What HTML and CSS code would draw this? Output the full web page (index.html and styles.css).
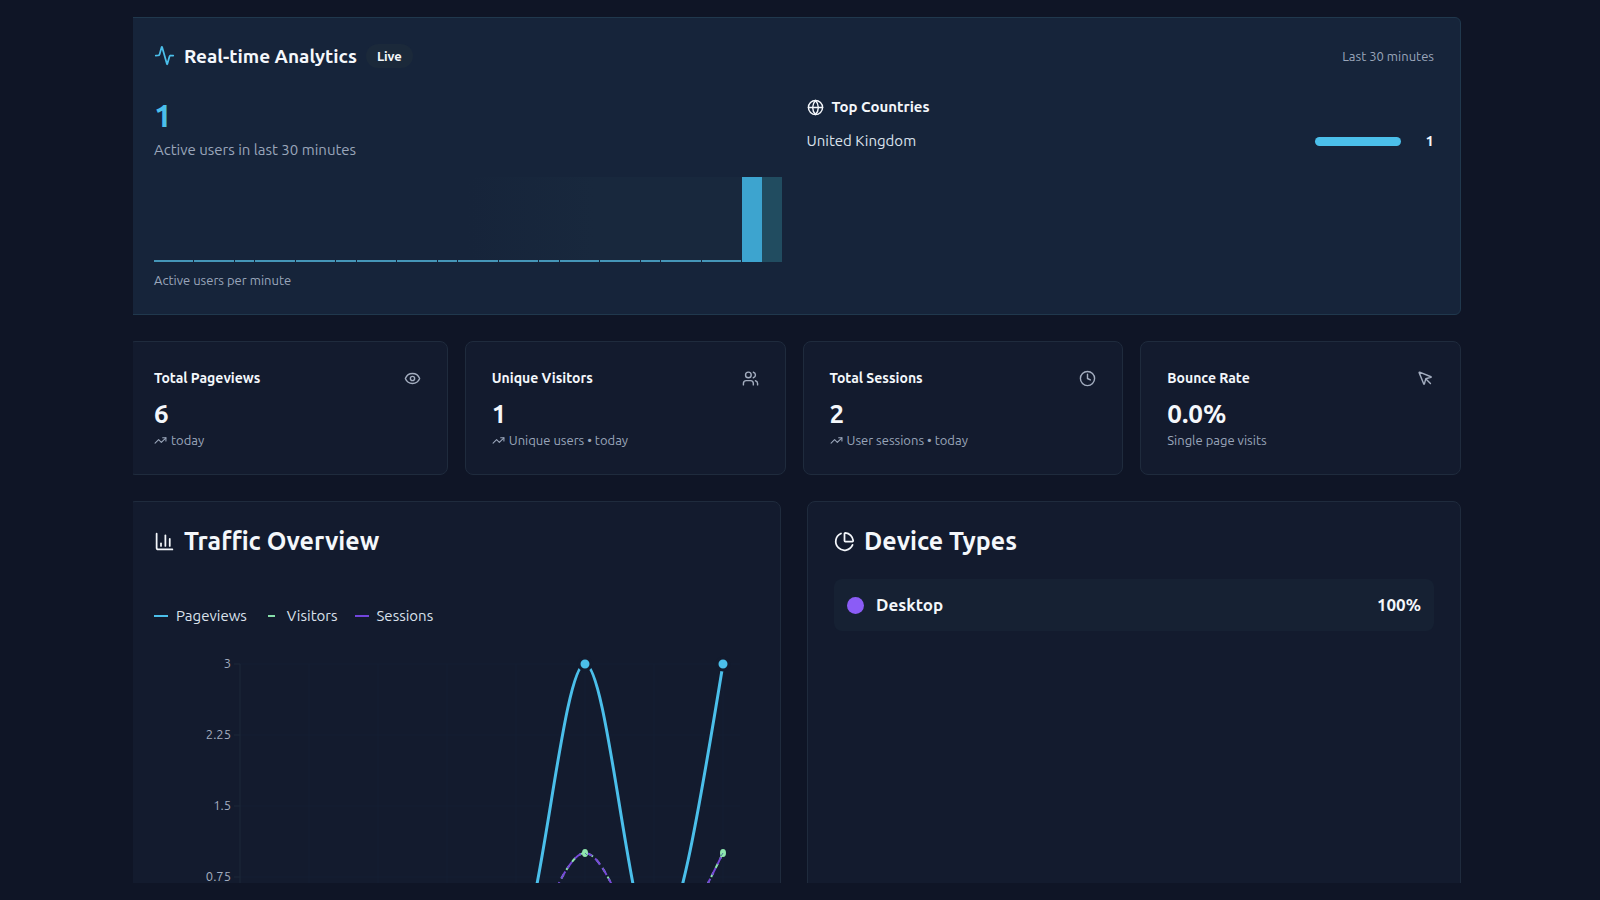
FILE: index.html
```
<!DOCTYPE html>
<html lang="en">
  <head>
    <meta charset="UTF-8" />
    <meta name="viewport" content="width=device-width, initial-scale=1.0" />
    <title>Analytics</title>
    <link rel="stylesheet" href="styles.css">
  </head>
  <body>
    <main class="viewport">
      <div class="dashboard">
        <!-- Real-time -->
        <section class="card realtime">
          <header class="realtime-header">
            <svg class="icon icon-lg accent" viewBox="0 0 24 24"><path d="M22 12h-2.48a2 2 0 0 0-1.93 1.46l-2.35 8.36a.25.25 0 0 1-.48 0L9.24 2.18a.25.25 0 0 0-.48 0l-2.35 8.36A2 2 0 0 1 4.49 12H2" /></svg>
            <h2 class="realtime-title">Real-time Analytics</h2>
            <span class="badge">Live</span>
            <span class="range">Last 30 minutes</span>
          </header>

          <div class="realtime-grid">
            <div>
              <div class="active-count">1</div>
              <p class="active-label">Active users in last 30 minutes</p>
              <div class="minute-bars">
                <span class="idle wide"></span>
                <span class="idle wide"></span>
                <span class="idle"></span>
                <span class="idle wide"></span>
                <span class="idle wide"></span>
                <span class="idle"></span>
                <span class="idle wide"></span>
                <span class="idle wide"></span>
                <span class="idle"></span>
                <span class="idle wide"></span>
                <span class="idle wide"></span>
                <span class="idle"></span>
                <span class="idle wide"></span>
                <span class="idle wide"></span>
                <span class="idle"></span>
                <span class="idle wide"></span>
                <span class="idle wide"></span>
                <span class="peak"></span>
                <span class="current"></span>
              </div>
              <p class="caption">Active users per minute</p>
            </div>

            <div>
              <h3 class="countries-title">
                <svg class="icon" viewBox="0 0 24 24"><circle cx="12" cy="12" r="10" /><path d="M12 2a14.5 14.5 0 0 0 0 20 14.5 14.5 0 0 0 0-20" /><path d="M2 12h20" /></svg>
                Top Countries
              </h3>
              <div class="country">
                <span>United Kingdom</span>
                <span class="country-bar"></span>
                <span class="country-count">1</span>
              </div>
            </div>
          </div>
        </section>

        <!-- Totals -->
        <section class="stats">
          <article class="card stat">
            <header class="stat-header">
              <h3 class="stat-title">Total Pageviews</h3>
              <svg class="icon muted" viewBox="0 0 24 24"><path d="M2.06 12.35a1 1 0 0 1 0-.7 10.75 10.75 0 0 1 19.88 0 1 1 0 0 1 0 .7 10.75 10.75 0 0 1-19.88 0" /><circle cx="12" cy="12" r="3" /></svg>
            </header>
            <div class="stat-value">6</div>
            <p class="stat-note">
              <svg class="icon icon-sm" viewBox="0 0 24 24"><path d="M22 7l-8.5 8.5-5-5L2 17" /><path d="M16 7h6v6" /></svg>
              today
            </p>
          </article>

          <article class="card stat">
            <header class="stat-header">
              <h3 class="stat-title">Unique Visitors</h3>
              <svg class="icon muted" viewBox="0 0 24 24"><path d="M16 21v-2a4 4 0 0 0-4-4H6a4 4 0 0 0-4 4v2" /><circle cx="9" cy="7" r="4" /><path d="M22 21v-2a4 4 0 0 0-3-3.87" /><path d="M16 3.13a4 4 0 0 1 0 7.75" /></svg>
            </header>
            <div class="stat-value">1</div>
            <p class="stat-note">
              <svg class="icon icon-sm" viewBox="0 0 24 24"><path d="M22 7l-8.5 8.5-5-5L2 17" /><path d="M16 7h6v6" /></svg>
              Unique users • today
            </p>
          </article>

          <article class="card stat">
            <header class="stat-header">
              <h3 class="stat-title">Total Sessions</h3>
              <svg class="icon muted" viewBox="0 0 24 24"><circle cx="12" cy="12" r="10" /><path d="M12 6v6l4 2" /></svg>
            </header>
            <div class="stat-value">2</div>
            <p class="stat-note">
              <svg class="icon icon-sm" viewBox="0 0 24 24"><path d="M22 7l-8.5 8.5-5-5L2 17" /><path d="M16 7h6v6" /></svg>
              User sessions • today
            </p>
          </article>

          <article class="card stat">
            <header class="stat-header">
              <h3 class="stat-title">Bounce Rate</h3>
              <svg class="icon muted" viewBox="0 0 24 24"><path d="M12.6 12.6L19 19" /><path d="M3.69 3.04a.5.5 0 0 0-.65.65l6.5 16a.5.5 0 0 0 .95-.06l1.57-6.08a2 2 0 0 1 1.48-1.48l6.1-1.58a.5.5 0 0 0 .06-.94z" /></svg>
            </header>
            <div class="stat-value">0.0%</div>
            <p class="stat-note">Single page visits</p>
          </article>
        </section>

        <!-- Charts -->
        <section class="panels">
          <article class="card panel">
            <h2 class="panel-title">
              <svg class="icon icon-lg" viewBox="0 0 24 24"><path d="M3 3v16a2 2 0 0 0 2 2h16" /><path d="M18 17V9" /><path d="M13 17V5" /><path d="M8 17v-3" /></svg>
              Traffic Overview
            </h2>
            <ul class="legend">
              <li><i class="swatch pageviews"></i>Pageviews</li>
              <li><i class="swatch visitors"></i>Visitors</li>
              <li><i class="swatch sessions"></i>Sessions</li>
            </ul>
            <svg class="chart" viewBox="154 640 600 340">
              <path class="grid-line" d="M240 664H740M240 735H740M240 806H740M240 877H740M309 664V947M378 664V947M447 664V947M516 664V947M585 664V947M654 664V947M723 664V947" />
              <path class="axis" d="M240 664V947M234 664H240M234 735H240M234 806H240M234 877H240" />
              <g class="ticks">
                <text x="231" y="668">3</text>
                <text x="231" y="739">2.25</text>
                <text x="231" y="810">1.5</text>
                <text x="231" y="881">0.75</text>
              </g>
              <path class="line line-pageviews" d="M240 947H516C539 947 562 664 585 664C608 664 631 947 654 947C677 947 700 805 723 664" />
              <path class="line line-visitors" d="M240 947H516C539 947 562 853 585 853C608 853 631 947 654 947C677 947 700 900 723 853" />
              <path class="line line-sessions" d="M240 947H516C539 947 562 853 585 853C608 853 631 947 654 947C677 947 700 900 723 853" />
              <circle class="dot" cx="585" cy="664" r="6" />
              <circle class="dot" cx="723" cy="664" r="6" />
              <ellipse class="dot-visitors" cx="585" cy="853" rx="3" ry="4" />
              <ellipse class="dot-visitors" cx="723" cy="853" rx="3" ry="4" />
              <path class="dot-mark" d="M585 853l2 2M721 856l2-3" />
            </svg>
          </article>

          <article class="card panel">
            <h2 class="panel-title">
              <svg class="icon icon-lg" viewBox="0 0 24 24"><path d="M21 12c.55 0 1-.45.95-1a10 10 0 0 0-8.95-8.95c-.55-.05-1 .4-1 .95v8a1 1 0 0 0 1 1z" /><path d="M21.21 15.89A10 10 0 1 1 8 2.83" /></svg>
              Device Types
            </h2>
            <div class="device">
              <i class="device-dot"></i>
              <span>Desktop</span>
              <span class="device-share">100%</span>
            </div>
          </article>
        </section>
      </div>
    </main>
  </body>
</html>
```
FILE: styles.css
```
* {
  box-sizing: border-box;
}

body {
  margin: 0;
  padding: 17px 139px 17px 133px;
  height: 100vh;
  overflow: hidden;
  background: #0f1526;
  color: #f4f7fb;
  font-family: Ubuntu, "Open Sans", sans-serif;
  font-size: 15px;
  line-height: 20px;
}

h2,
h3,
p,
ul {
  margin: 0;
  padding: 0;
}

.viewport {
  height: 100%;
  overflow: hidden;
}

/* the left edge of the cards runs under the viewport */
.dashboard {
  display: flex;
  flex-direction: column;
  gap: 26px;
  margin-left: -6px;
}

.card {
  padding: 26px;
  border: 1px solid #1f2b3d;
  border-radius: 8px;
  background: #131b2e;
}

.icon {
  width: 17px;
  height: 17px;
  flex: none;
  fill: none;
  stroke: currentColor;
  stroke-width: 2;
  stroke-linecap: round;
  stroke-linejoin: round;
}

.icon-lg {
  width: 21px;
  height: 21px;
}

.icon-sm {
  width: 13px;
  height: 13px;
}

.accent {
  color: #4bbfea;
}

.muted {
  color: #a3adbf;
}

/* Real-time */
.realtime {
  padding-bottom: 24px;
  border-color: #20384d;
  border-radius: 6px;
  background: #16243a;
}

.realtime-header {
  display: flex;
  align-items: center;
  gap: 9px;
  height: 23px;
}

.realtime-title {
  font-size: 19px;
  font-weight: 600;
}

.badge {
  padding: 2px 11px;
  border-radius: 12px;
  background: #1b293a;
  font-size: 13px;
  font-weight: 600;
}

.range {
  margin-left: auto;
  color: #9aa6ba;
  font-size: 13px;
}

.realtime-grid {
  display: grid;
  grid-template-columns: 1fr 1fr;
  gap: 25px;
  margin-top: 30px;
}

.active-count {
  color: #4bbfea;
  font-size: 32px;
  font-weight: 700;
  line-height: 36px;
}

.active-label {
  margin-top: 7px;
  color: #9aa6ba;
}

.minute-bars {
  display: flex;
  align-items: flex-end;
  height: 85px;
  margin-top: 17px;
  background: linear-gradient(to right, transparent 50%, #18283d 70%);
}

.minute-bars span {
  flex: 1 1 0;
}

.minute-bars .wide {
  flex-grow: 2;
}

.idle {
  height: 2px;
  border-right: 1px solid #16243a;
  background: #4596b8;
}

.peak {
  height: 100%;
  background: #3da4cf;
}

.current {
  height: 100%;
  background: #214c60;
}

.caption {
  margin-top: 8px;
  color: #9aa6ba;
  font-size: 13px;
}

.countries-title {
  display: flex;
  align-items: center;
  gap: 8px;
  font-size: 15px;
  font-weight: 600;
}

.country {
  display: flex;
  align-items: center;
  margin-top: 14px;
  color: #dbe2ec;
}

.country-bar {
  width: 86px;
  height: 9px;
  margin-left: auto;
  border-radius: 5px;
  background: #4bbfea;
}

.country-count {
  width: 33px;
  color: #f4f7fb;
  font-weight: 600;
  text-align: right;
}

/* Totals */
.stats {
  display: grid;
  grid-template-columns: repeat(4, 1fr);
  gap: 17px;
}

.stat {
  height: 134px;
}

.stat-header {
  display: flex;
  align-items: center;
  justify-content: space-between;
}

.stat-title {
  font-size: 14px;
  font-weight: 600;
}

.stat-value {
  margin-top: 10px;
  font-size: 26px;
  font-weight: 700;
  line-height: 32px;
}

.stat-note {
  display: flex;
  align-items: center;
  gap: 4px;
  color: #9aa6ba;
  font-size: 13px;
}

/* Charts */
.panels {
  display: grid;
  grid-template-columns: 1fr 1fr;
  gap: 26px;
}

.panel-title {
  display: flex;
  align-items: center;
  gap: 9px;
  font-size: 25px;
  font-weight: 600;
  line-height: 26px;
}

.legend {
  display: flex;
  gap: 17px;
  margin-top: 52px;
  color: #dbe2ec;
  list-style: none;
}

.legend li {
  display: flex;
  align-items: center;
  gap: 8px;
}

.swatch {
  width: 14px;
  height: 2px;
}

.swatch.pageviews {
  background: #4bbfea;
}

.swatch.visitors {
  width: 7px;
  margin: 0 4px;
  background: #86dfaa;
}

.swatch.sessions {
  background: #7245dc;
}

.chart {
  display: block;
  width: 100%;
  margin-top: 14px;
}

.grid-line {
  stroke: #151f32;
}

.axis {
  fill: none;
  stroke: #1c2839;
}

.ticks {
  fill: #a3adbf;
  font-size: 13px;
  text-anchor: end;
}

.line {
  fill: none;
  stroke-width: 2;
}

.line-pageviews {
  stroke: #4bbfea;
  stroke-width: 3;
}

.line-visitors {
  stroke: #8fe6ae;
  stroke-dasharray: 5 5;
}

.line-sessions {
  stroke: #7648d8;
  stroke-dasharray: 8 4;
}

.dot {
  fill: #4bbfea;
  stroke: #131b2e;
  stroke-width: 3;
}

.dot-visitors {
  fill: #8fe6ae;
}

.dot-mark {
  stroke: #4d78a0;
}

.device {
  display: flex;
  align-items: center;
  gap: 12px;
  margin-top: 25px;
  padding: 13px;
  border-radius: 8px;
  background: #162133;
  font-size: 17px;
  font-weight: 600;
  line-height: 26px;
}

.device-dot {
  width: 17px;
  height: 17px;
  border-radius: 50%;
  background: #8b5cf6;
}

.device-share {
  margin-left: auto;
}
```
